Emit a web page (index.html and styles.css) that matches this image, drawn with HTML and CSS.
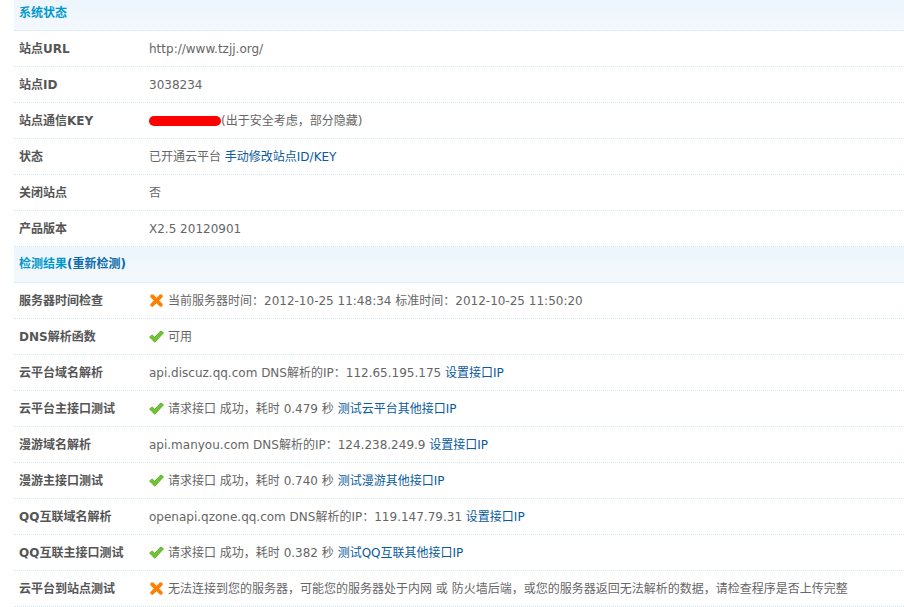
FILE: index.html
```html
<!DOCTYPE html>
<html lang="zh-CN">
<head>
<meta charset="utf-8">
<title>系统状态</title>
<link rel="stylesheet" href="styles.css">
</head>
<body>
<svg class="defs" width="0" height="0" aria-hidden="true">
  <symbol id="ok" viewBox="0 0 14 12"><path d="M0.5 6.5 L3 4.5 L5.3 6.8 L11 0.8 L13.6 2.6 L5.4 11.4 Z" fill="#6cc72e" stroke="#4f9e1e" stroke-width="0.7" stroke-linejoin="round"/></symbol>
  <symbol id="no" viewBox="0 0 12 12"><path d="M2 2 L10 10 M10 2 L2 10" stroke="#ff8000" stroke-width="3.4" stroke-linecap="round" fill="none"/></symbol>
</svg>
<div class="panel">
  <div class="head first">系统状态</div>
  <div class="row"><div class="k">站点URL</div><div class="v">http://www.tzjj.org/</div></div>
  <div class="row"><div class="k">站点ID</div><div class="v">3038234</div></div>
  <div class="row"><div class="k">站点通信KEY</div><div class="v"><span class="mask"></span>(出于安全考虑，部分隐藏)</div></div>
  <div class="row"><div class="k">状态</div><div class="v">已开通云平台 <a href="#">手动修改站点ID/KEY</a></div></div>
  <div class="row"><div class="k">关闭站点</div><div class="v">否</div></div>
  <div class="row"><div class="k">产品版本</div><div class="v">X2.5 20120901</div></div>
  <div class="head">检测结果<a href="#" class="relink">(重新检测)</a></div>
  <div class="row"><div class="k">服务器时间检查</div><div class="v"><svg class="ic-no"><use href="#no"/></svg>当前服务器时间：2012-10-25 11:48:34 标准时间：2012-10-25 11:50:20</div></div>
  <div class="row"><div class="k">DNS解析函数</div><div class="v"><svg class="ic-ok"><use href="#ok"/></svg>可用</div></div>
  <div class="row"><div class="k">云平台域名解析</div><div class="v">api.discuz.qq.com DNS解析的IP：112.65.195.175 <a href="#">设置接口IP</a></div></div>
  <div class="row"><div class="k">云平台主接口测试</div><div class="v"><svg class="ic-ok"><use href="#ok"/></svg>请求接口 成功，耗时 0.479 秒 <a href="#">测试云平台其他接口IP</a></div></div>
  <div class="row"><div class="k">漫游域名解析</div><div class="v">api.manyou.com DNS解析的IP：124.238.249.9 <a href="#">设置接口IP</a></div></div>
  <div class="row"><div class="k">漫游主接口测试</div><div class="v"><svg class="ic-ok"><use href="#ok"/></svg>请求接口 成功，耗时 0.740 秒 <a href="#">测试漫游其他接口IP</a></div></div>
  <div class="row"><div class="k">QQ互联域名解析</div><div class="v">openapi.qzone.qq.com DNS解析的IP：119.147.79.31 <a href="#">设置接口IP</a></div></div>
  <div class="row"><div class="k">QQ互联主接口测试</div><div class="v"><svg class="ic-ok"><use href="#ok"/></svg>请求接口 成功，耗时 0.382 秒 <a href="#">测试QQ互联其他接口IP</a></div></div>
  <div class="row"><div class="k">云平台到站点测试</div><div class="v"><svg class="ic-no"><use href="#no"/></svg>无法连接到您的服务器，可能您的服务器处于内网 或 防火墙后端，或您的服务器返回无法解析的数据，请检查程序是否上传完整</div></div>
  <div class="foot"></div>
</div>
</body>
</html>
```

FILE: styles.css
```css
html, body { margin: 0; padding: 0; background: #fff; overflow: hidden; }
body { height: 607px; font: 12px/18px "DejaVu Sans", "Noto Sans CJK SC", sans-serif; color: #666; }
.defs { position: absolute; }
.panel { margin-left: 14px; }
.head {
  height: 35px; line-height: 35px; padding-left: 5px;
  font-weight: bold; color: #09c;
  background: linear-gradient(#edf5fd, #f3f8fc);
  border-bottom: 1px dotted #d5e8f3;
}
.head.first { height: 30px; line-height: 27px; }
.relink { color: #0c6ba8; text-decoration: none; }
.row { display: flex; height: 35px; align-items: center; border-bottom: 1px dotted #d5e8f3; }
.k { width: 130px; padding-left: 5px; flex: none; font-weight: bold; color: #555; }
.v { white-space: nowrap; display: flex; align-items: center; gap: 0; white-space: pre; }
a { color: #0a5a9c; text-decoration: none; }
.mask { display: inline-block; width: 72px; height: 10px; border-radius: 5px; background: #f00; }
.ic-no { width: 13px; height: 13px; margin: 0 5px 0 1px; }
.ic-ok { width: 15px; height: 13px; margin-right: 4px; }
.foot { height: 2px; background: #f0f6fb; }
```
